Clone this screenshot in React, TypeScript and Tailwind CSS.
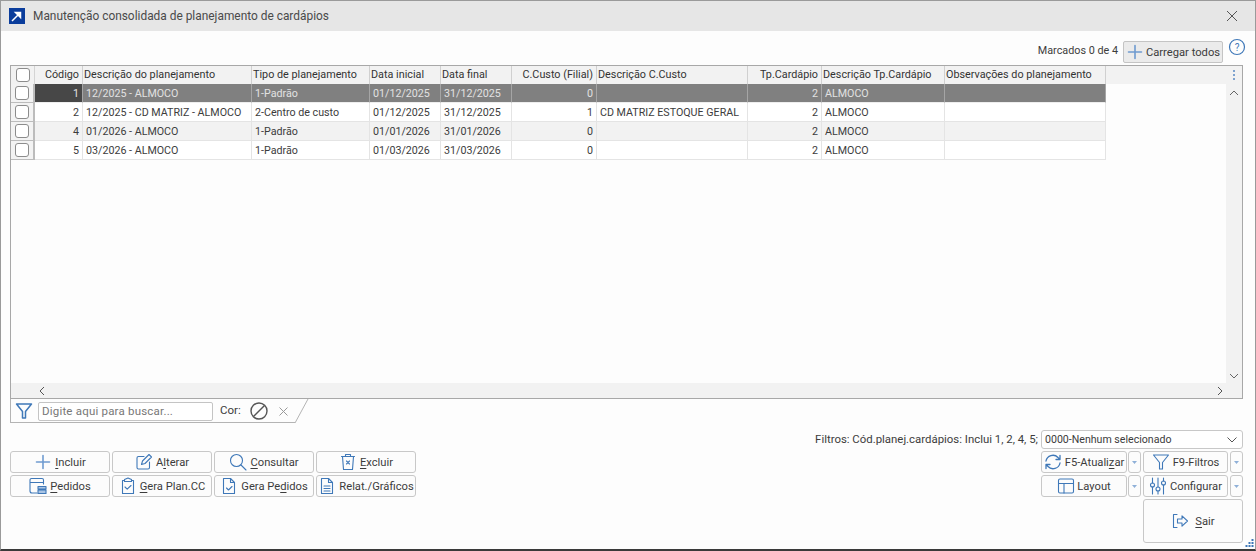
import React from "react";

const ic = "#3f78b8";
const font = "font-['Roboto','Noto_Sans',sans-serif]";

type Col = { w: string; label: string; right?: boolean };
const cols: Col[] = [
  { w: "w-[48px]", label: "Código", right: true },
  { w: "w-[169px]", label: "Descrição do planejamento" },
  { w: "w-[118px]", label: "Tipo de planejamento" },
  { w: "w-[71px]", label: "Data inicial" },
  { w: "w-[71px]", label: "Data final" },
  { w: "w-[85px]", label: "C.Custo (Filial)", right: true },
  { w: "w-[151px]", label: "Descrição C.Custo" },
  { w: "w-[74px]", label: "Tp.Cardápio", right: true },
  { w: "w-[123px]", label: "Descrição Tp.Cardápio" },
  { w: "w-[161px]", label: "Observações do planejamento" },
];

const rows: string[][] = [
  ["1", "12/2025 - ALMOCO", "1-Padrão", "01/12/2025", "31/12/2025", "0", "", "2", "ALMOCO", ""],
  ["2", "12/2025 - CD MATRIZ - ALMOCO", "2-Centro de custo", "01/12/2025", "31/12/2025", "1", "CD MATRIZ ESTOQUE GERAL", "2", "ALMOCO", ""],
  ["4", "01/2026 - ALMOCO", "1-Padrão", "01/01/2026", "31/01/2026", "0", "", "2", "ALMOCO", ""],
  ["5", "03/2026 - ALMOCO", "1-Padrão", "01/03/2026", "31/03/2026", "0", "", "2", "ALMOCO", ""],
];

function Check() {
  return <span className="block w-[14px] h-[14px] rounded-[3px] border border-[#8c8c8c] bg-white" />;
}

function Svg({ children, size = 18 }: { children: React.ReactNode; size?: number }) {
  return (
    <svg width={size} height={size} viewBox="0 0 18 18" fill="none" stroke={ic} strokeWidth="1.1" strokeLinecap="round" strokeLinejoin="round" className="shrink-0">
      {children}
    </svg>
  );
}

const Plus = () => <Svg><path d="M9 2.500v13M2.500 9h13" strokeWidth="1.600" stroke="#6f9bd0" /></Svg>;
const Edit = () => (
  <Svg>
    <path d="M9 3.500H3.500a1.500 1.500 0 0 0-1.500 1.500v9.500a1.500 1.500 0 0 0 1.500 1.500H13a1.500 1.500 0 0 0 1.500-1.500V9" />
    <path d="M6.500 11.500l1-3.500L14 1.500l2.500 2.500L10 10.500z" />
  </Svg>
);
const Search = () => (
  <Svg>
    <circle cx="7.500" cy="7.500" r="6" />
    <path d="M12 12l5 5" />
  </Svg>
);
const Trash = () => (
  <Svg>
    <path d="M2.500 3.500h13M6.500 3.500V1.500h5v2M3.500 3.500l1 13h9l1-13" />
    <path d="M7.500 8l3 3M10.500 8l-3 3" />
  </Svg>
);
const Orders = () => (
  <Svg>
    <path d="M8 16H3a2 2 0 0 1-2-2V3a1.500 1.500 0 0 1 1.500-1.500H13A1.500 1.500 0 0 1 14.500 3v4M1 5.500h13.500" />
    <path d="M9 9.500h8v2.500H9zM9 13h8v3.500H9z" fill="#a9c4e4" />
  </Svg>
);
const Clip = () => (
  <Svg>
    <path d="M5.500 3.500H3.500v13h11v-13h-2" />
    <path d="M5.500 4.500V2.500L9 1l3.500 1.500v2z" />
    <path d="M6 10l2.200 2.200L12 8.500" />
  </Svg>
);
const DocCheck = () => (
  <Svg>
    <path d="M3.500 1.500h7l4 4v11h-11z" />
    <path d="M10.500 1.500v4h4M6.500 11l2 2 3.500-3.500" />
  </Svg>
);
const DocText = () => (
  <Svg>
    <path d="M3.500 1.500h7l4 4v11h-11z" />
    <path d="M10.500 1.500v4h4M6 9h6M6 11.500h6M6 14h6" />
  </Svg>
);
const Refresh = () => (
  <Svg>
    <path d="M2 8a7 7 0 0 1 12-3.500l2 2M16 2.500v4h-4" strokeWidth="1.300" />
    <path d="M16 10a7 7 0 0 1-12 3.500l-2-2M2 15.500v-4h4" strokeWidth="1.300" />
  </Svg>
);
const Funnel = ({ width = 1.1 }: { width?: number }) => (
  <Svg>
    <path d="M1.500 2h15l-6 7.500v6.500h-3V9.500z" strokeWidth={width} />
  </Svg>
);
const LayoutIc = () => (
  <Svg>
    <rect x="1.500" y="2" width="15" height="14" rx="1.500" />
    <path d="M1.500 6.500h15M7 6.500V16" />
  </Svg>
);
const Sliders = () => (
  <Svg>
    <path d="M3.500 1v5M3.500 10v7M9 1v9M9 14v3M14.500 1v3M14.500 8v9" />
    <circle cx="3.500" cy="8" r="2" />
    <circle cx="9" cy="12" r="2" />
    <circle cx="14.500" cy="6" r="2" />
  </Svg>
);
const Exit = () => (
  <Svg>
    <path d="M6 2.500H2.500v13H6" />
    <path d="M6.500 7h4.500V3.800L16.500 9 11 14.200V11H6.500z" />
  </Svg>
);

function U({ c }: { c: string }) {
  return <span className="underline underline-offset-2">{c}</span>;
}

function Btn({ icon, children, className = "", gap = "gap-[3px]" }: { icon: React.ReactNode; children: React.ReactNode; className?: string; gap?: string }) {
  return (
    <button className={`h-[22px] flex items-center justify-center whitespace-nowrap ${gap} rounded-[3px] border border-[#c8c8c8] bg-[#fcfcfc] text-[11.200px] text-[#3c3c3c] ${className}`}>
      {icon}
      <span className="pt-[2px]">{children}</span>
    </button>
  );
}

function Drop() {
  return (
    <button className="w-[13px] h-[22px] flex items-center justify-center rounded-[3px] border border-[#c8c8c8] bg-[#fcfcfc]">
      <svg width="5" height="3" viewBox="0 0 5 3" fill="#8fb0d8"><path d="M0 0h5L2.500 3z" /></svg>
    </button>
  );
}

export default function App() {
  return (
    <div className={`${font} relative w-[1256px] h-[551px] flex flex-col bg-[#fdfdfd] border border-[#9a9a9a] border-b-[2px] border-b-[#3a3a3a] text-[#3c3c3c] overflow-hidden`}>
      <div className="h-[30px] shrink-0 flex items-center bg-[#e6e6e6] pl-[8px] pr-[17px]">
        <svg width="16" height="16" viewBox="0 0 16 16" className="shrink-0">
          <rect width="16" height="16" fill="#0b3d9c" />
          <path d="M3 13L10 6M6.500 4.500h5v5z" stroke="#fff" strokeWidth="1.500" fill="#fff" />
        </svg>
        <span className="ml-[8px] pt-[2px] text-[11.900px] text-[#4a4a4a]">Manutenção consolidada de planejamento de cardápios</span>
        <svg width="12" height="12" viewBox="0 0 12 12" className="ml-auto" stroke="#555" strokeWidth="1">
          <path d="M1 1l10 10M11 1L1 11" />
        </svg>
      </div>

      <div className="h-[34px] shrink-0 flex items-center justify-end pl-[9px] pr-[9px]">
        <span className="text-[10.800px] mr-[5px] mt-[7px]">Marcados 0 de 4</span>
        <button className="w-[100px] h-[22px] mt-[8px] flex items-center justify-center gap-[2px] whitespace-nowrap rounded-[2px] border border-[#c4c4c4] bg-[#ebebeb] text-[11.200px]">
          <Plus />
          <span className="pt-[2px]">Carregar todos</span>
        </button>
        <svg width="18" height="18" viewBox="0 0 18 18" className="ml-[5px] -mt-[3px]" fill="none" stroke={ic}>
          <circle cx="9" cy="9" r="7.500" strokeWidth="1.200" />
          <text x="9" y="12.500" textAnchor="middle" fontSize="10" fill={ic} stroke="none">?</text>
        </svg>
      </div>

      <div className="ml-[9px] mr-[12px] h-[334px] shrink-0 flex flex-col border border-[#a8a8a8]">
        <div className="flex-1 flex min-h-0">
          <div className="flex-1 min-w-0 flex flex-col">
            <div className="h-[18px] flex bg-[#f2f2f2] text-[10.800px] leading-[17px] text-[#333]">
              <div className="w-[24px] flex items-center justify-center border-r border-[#d4d4d4]"><Check /></div>
              {cols.map((c) => (
                <div key={c.label} className={`${c.w} pl-[1px] whitespace-nowrap border-r border-[#d0d0d0] ${c.right ? "text-right pr-[3px]" : ""}`}>{c.label}</div>
              ))}
            </div>
            {rows.map((r, i) => (
              <div key={r[0]} className={`h-[19px] w-fit flex text-[10.700px] leading-[20px] ${i === 0 ? "bg-[#808080] text-[#e2e2e2]" : i === 2 ? "bg-[#f2f2f2]" : "bg-white"}`}>
                <div className="w-[24px] flex items-center justify-center bg-[#f3f3f3] border-r-[2px] border-b border-[#bcbcbc]"><Check /></div>
                {r.map((v, j) => (
                  <div key={j} className={`${cols[j].w} px-[3px] whitespace-nowrap overflow-hidden border-r border-b ${i === 0 ? "border-r-[#a5a5a5] border-b-[#eeeeee]" : "border-[#e4e4e4]"} ${cols[j].right ? "text-right" : ""} ${i === 0 && j === 0 ? "bg-[#474747]" : ""}`}>{v}</div>
                ))}
              </div>
            ))}
          </div>
          <div className="w-[16px] shrink-0 flex flex-col items-center bg-[#f2f2f2]">
            <div className="h-[18px] flex flex-col items-center justify-center gap-[2px]">
              <span className="w-[2px] h-[2px] bg-[#7fa3cf]" />
              <span className="w-[2px] h-[2px] bg-[#7fa3cf]" />
              <span className="w-[2px] h-[2px] bg-[#7fa3cf]" />
            </div>
            <svg width="10" height="6" viewBox="0 0 10 6" className="mt-[6px]" fill="none" stroke="#666"><path d="M1 5l4-4 4 4" /></svg>
            <svg width="10" height="6" viewBox="0 0 10 6" className="mt-auto mb-[4px]" fill="none" stroke="#666"><path d="M1 1l4 4 4-4" /></svg>
          </div>
        </div>
        <div className="h-[15px] shrink-0 flex items-center justify-between bg-[#f2f2f2] pl-[28px] pr-[19px]">
          <svg width="6" height="10" viewBox="0 0 6 10" fill="none" stroke="#555"><path d="M5 1L1 5l4 4" /></svg>
          <svg width="6" height="10" viewBox="0 0 6 10" fill="none" stroke="#555"><path d="M1 1l4 4-4 4" /></svg>
        </div>
      </div>

      <div className="relative ml-[9px] h-[24px] w-[302px] shrink-0 flex items-center pl-[5px]">
        <div className="absolute left-0 bottom-0 w-[285px] h-[1px] bg-[#b4b4b4]" />
        <div className="absolute left-0 top-0 bottom-0 w-[1px] bg-[#b4b4b4]" />
        <svg width="16" height="24" viewBox="0 0 16 24" className="absolute right-[2px] top-0" fill="none" stroke="#b4b4b4"><path d="M1 24L14 0" /></svg>
        <Funnel width={1.500} />
        <input readOnly placeholder="Digite aqui para buscar..." className="ml-[5px] w-[175px] h-[19px] px-[3px] rounded-[2px] border border-[#c4c4c4] bg-white text-[11.500px] tracking-[0.2px] outline-none placeholder:text-[#777]" />
        <span className="ml-[7px] text-[11.500px]">Cor:</span>
        <svg width="20" height="20" viewBox="0 0 20 20" className="ml-[8px]" fill="none" stroke="#555" strokeWidth="1.400">
          <circle cx="10" cy="10" r="8" />
          <path d="M4.500 15.500L15.500 4.500" />
        </svg>
        <svg width="9" height="9" viewBox="0 0 9 9" className="ml-[10px]" fill="none" stroke="#999"><path d="M.5.5l8 8M8.500.5l-8 8" /></svg>
      </div>

      <div className="flex-1 min-h-0 flex justify-between items-end pl-[9px] pr-[12px] pb-[6px]">
        <div className="grid grid-cols-[100px_100px_100px_100px] gap-x-[2px] gap-y-[2px] mb-[46px]">
          <Btn icon={<Plus />}><U c="I" />ncluir</Btn>
          <Btn icon={<Edit />}>A<U c="l" />terar</Btn>
          <Btn icon={<Search />}><U c="C" />onsultar</Btn>
          <Btn icon={<Trash />}><U c="E" />xcluir</Btn>
          <Btn icon={<Orders />}><U c="P" />edidos</Btn>
          <Btn icon={<Clip />}><U c="G" />era Plan.CC</Btn>
          <Btn icon={<DocCheck />}>Gera Pe<U c="d" />idos</Btn>
          <Btn icon={<DocText />}>Relat./Gráficos</Btn>
        </div>
        <div className="flex flex-col items-end gap-[2px]">
          <div className="flex items-center gap-[3px]">
            <span className="text-[11.400px]">Filtros: Cód.planej.cardápios: Inclui 1, 2, 4, 5;</span>
            <div className="w-[202px] h-[19px] flex items-center justify-between pl-[3px] pr-[5px] rounded-[3px] border border-[#c8c8c8] bg-white text-[10.600px]">
              <span>0000-Nenhum selecionado</span>
              <svg width="10" height="6" viewBox="0 0 10 6" fill="none" stroke="#555"><path d="M.5.5L5 5 9.500.5" /></svg>
            </div>
          </div>
          <div className="grid grid-cols-[86px_13px_87px_13px] gap-x-[1px] gap-y-[2px]">
            <Btn icon={<Refresh />}>F5-Atuali<U c="z" />ar</Btn>
            <Drop />
            <Btn icon={<Funnel />} className="mx-[1px]">F9-Filtros</Btn>
            <Drop />
            <Btn icon={<LayoutIc />} gap="gap-[2px]">Layout</Btn>
            <Drop />
            <Btn icon={<Sliders />} className="mx-[1px]">Configurar</Btn>
            <Drop />
          </div>
          <Btn icon={<Exit />} className="w-[100px] !h-[44px]" gap="gap-[6px]"><U c="S" />air</Btn>
        </div>
      </div>

      <svg width="9" height="9" viewBox="0 0 9 9" className="absolute right-[1px] bottom-[1px]" fill="#3f78b8">
        <rect x="6.500" y="0" width="2" height="2" />
        <rect x="3.500" y="3" width="2" height="2" />
        <rect x="6.500" y="3" width="2" height="2" />
        <rect x="0.500" y="6" width="2" height="2" />
        <rect x="3.500" y="6" width="2" height="2" />
        <rect x="6.500" y="6" width="2" height="2" />
      </svg>
    </div>
  );
}
